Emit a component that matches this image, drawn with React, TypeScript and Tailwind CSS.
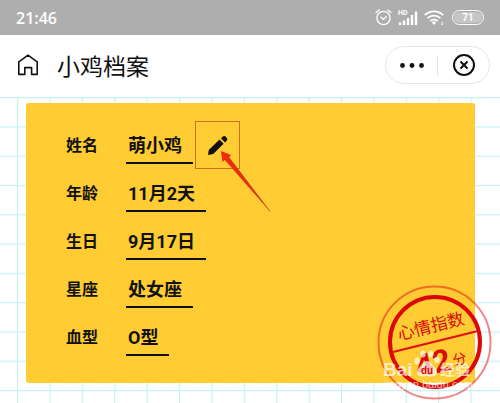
import clsx from "clsx";

const profile = [
  { label: "姓名", value: "萌小鸡", editable: true },
  { label: "年龄", value: "11月2天" },
  { label: "生日", value: "9月17日" },
  { label: "星座", value: "处女座" },
  { label: "血型", value: "O型" },
];

const StatusBar = () => (
  <div className="h-[35px] bg-[#aeaeae] text-white flex items-center pl-4 pr-4">
    <span className="font-['Open_Sans',sans-serif] text-base leading-5 font-semibold">21:46</span>
    <div className="ml-auto flex items-center gap-1.5">
      {/* alarm */}
      <svg className="w-[17px] h-[17px]" viewBox="0 0 17 17" fill="none" stroke="currentColor" strokeWidth="1.3" strokeLinecap="round">
        <circle cx="8.5" cy="9" r="6.6" />
        <path d="M1 3.6 4.2 1M16 3.6 12.8 1M6 8.2 8.4 10.4 11.4 7.6" />
      </svg>
      <svg className="w-[20px] h-[17px]" viewBox="0 0 20 17" fill="currentColor">
        <text x="0" y="6" fontSize="7" fontWeight="700" fontFamily="Roboto, sans-serif">HD</text>
        <path d="M.8 13.5h2.400V16H.8zM4.800 11.500h2.400V16H4.800zM8.800 9h2.400v7H8.800zM12.800 6h2.400v10h-2.400zM16.800 2.500h2.400V16h-2.400z" />
      </svg>
      {/* wifi */}
      <svg className="w-[20px] h-[17px]" viewBox="0 0 20 17" fill="none" stroke="currentColor" strokeWidth="1.8">
        <path d="M.8 6.200a13 13 0 0 1 18.400 0M3.600 9.200a9 9 0 0 1 12.800 0M6.300 12.100a5.200 5.200 0 0 1 7.400 0" />
        <path d="M10 16 7.800 13.600a3.200 3.200 0 0 1 4.400 0z" fill="currentColor" stroke="none" />
        <path d="M18.300 12.500v3.500M17.200 14.800l1.100 1.200" strokeWidth=".8" />
      </svg>
      <span className="ml-0.5 w-8 h-[15px] rounded-full border border-white p-px flex">
        <span className="flex-1 rounded-full bg-[#c6c6c6] flex items-center justify-center font-['Roboto',sans-serif] text-[10px] leading-3 font-bold">71</span>
      </span>
    </div>
  </div>
);

const Header = () => (
  <header className="h-[62px] bg-white flex items-center pl-4 pr-[10px] pb-0.5">
    <button aria-label="首页" className="w-6 h-6 flex items-center justify-center">
      <svg className="w-[22px] h-[22px]" viewBox="0 0 22 22" fill="none" stroke="#111" strokeWidth="1.6" strokeLinejoin="round">
        <path d="M1.800 7.800 11 1.200l9.200 6.600v12.600h-5.600v-6.800H7.800v6.800h-6z" />
      </svg>
    </button>
    <h1 className="ml-[17px] text-[23px] leading-8 text-[#111]">小鸡档案</h1>
    <div className="ml-auto w-[105px] h-[38px] rounded-full border border-[#e6e6e6] flex items-center">
      <button aria-label="更多" className="flex-1 h-full flex items-center justify-center">
        <svg className="w-6 h-[5px]" viewBox="0 0 24 5" fill="#111">
          <circle cx="2.500" cy="2.500" r="2.400" />
          <circle cx="12" cy="2.500" r="2.400" />
          <circle cx="21.500" cy="2.500" r="2.400" />
        </svg>
      </button>
      <span className="w-px h-5 bg-[#e4e4e4]" />
      <button aria-label="关闭" className="flex-1 h-full flex items-center justify-center">
        <svg className="w-[22px] h-[22px]" viewBox="0 0 22 22" fill="none" stroke="#111" strokeWidth="2">
          <circle cx="11" cy="11" r="10" />
          <path d="m7.500 7.500 7 7m0-7-7 7" />
        </svg>
      </button>
    </div>
  </header>
);

const GridPaper = () => (
  <svg className="absolute inset-0 w-full h-full" aria-hidden="true">
    <defs>
      <pattern id="grid" x="17" y="0" width="32.400" height="29.300" patternUnits="userSpaceOnUse">
        <path d="M.6 0V29.300M0 .6H32.400" stroke="#c9f0f4" strokeWidth="1.200" fill="none" />
      </pattern>
    </defs>
    <rect width="100%" height="100%" fill="url(#grid)" />
  </svg>
);

const EditButton = () => (
  <div className="absolute left-full top-[-13px] ml-0.5">
    <button aria-label="编辑姓名" className="w-[45px] h-[48px] border border-[#d0701c] flex items-center justify-center">
      <svg className="w-5 h-5" viewBox="0 0 20 20" fill="#111">
        <path d="M0 20 .8 15 11.500 4.600 15.600 8.700 5.200 19z" />
        <path d="M13 3.200 14.800 1.500Q16.500.3 18 1.900L18.800 2.900Q20 4.400 18.700 5.700L17 7.400z" />
      </svg>
    </button>
    {/* pointer towards the pencil */}
    <svg className="absolute left-[25px] top-[30px] w-[52px] h-[62px] pointer-events-none" viewBox="0 0 52 62">
      <path d="M1 0 11 4 9 6.400 50 60.500 4.800 9 2.500 11z" fill="#ee2a10" />
      <path d="M9 6.400 50 60.500" stroke="#a83a10" strokeWidth=".7" />
    </svg>
  </div>
);

const MoodStamp = () => (
  <svg className="absolute right-[-18px] bottom-[-19px] w-[118px] h-[118px]" viewBox="0 0 118 118" role="img" aria-label="心情指数 42分">
    <g fill="none" stroke="#e01010">
      <circle cx="59.500" cy="58.500" r="56" strokeWidth="2" opacity=".5" />
      <circle cx="60" cy="58" r="45" strokeWidth="4" stroke="#dc0808" />
      <path d="M18 68 103 47" strokeWidth="2.200" />
    </g>
    <g transform="rotate(-14 59 59)" fill="#d80c08" fontFamily="'Noto Sans CJK SC', sans-serif">
      <text x="60" y="48" fontSize="17" textAnchor="middle">心情指数</text>
      <text x="53" y="89" fontSize="31" fontWeight="700" fontFamily="Roboto, sans-serif" textAnchor="middle">42</text>
      <text x="73" y="86" fontSize="14">分</text>
    </g>
    <g fill="#fff" opacity=".7" fontFamily="'Liberation Sans', 'Noto Sans CJK SC', sans-serif" fontWeight="700">
      <text x="8" y="92" fontSize="19">Bai</text>
      <ellipse cx="42" cy="77" rx="2.600" ry="3.400" />
      <ellipse cx="48" cy="70" rx="2.600" ry="3.600" />
      <ellipse cx="56" cy="70" rx="2.600" ry="3.600" />
      <ellipse cx="62" cy="76" rx="2.600" ry="3.400" />
      <path d="M52 77C56 77 58 82 61 85 64 90 60 94 52 92 44 94 40 90 43 85 46 82 48 77 52 77z" />
      <text x="65" y="91" fontSize="15">经验</text>
    </g>
    <text x="52" y="90" fontSize="10" fontWeight="700" fill="#d80c08" fontFamily="'Liberation Sans', sans-serif" textAnchor="middle">du</text>
    <text x="9" y="104" fontSize="11" fill="#fff" opacity=".7" fontFamily="'Liberation Sans', sans-serif">jingyan.baidu.com</text>
  </svg>
);

const ProfileCard = () => (
  <section className="relative mt-1.5 ml-[26px] mr-[25px] rounded-[3px] bg-[#ffcc33] pt-[31px] pb-[27px] pl-10">
    <dl className="flex flex-col gap-[18px] font-['Roboto','Noto_Sans_CJK_SC',sans-serif] font-bold text-[#111]">
      {profile.map(({ label, value, editable }) => (
        <div key={label} className="flex items-start">
          <dt className="w-[60px] text-base leading-6">{label}</dt>
          <dd className={clsx("pl-0.5 pr-[11px] pb-1 text-lg leading-6 border-b-2 border-[#111]", editable && "relative")}>
            {value}
            {editable && <EditButton />}
          </dd>
        </div>
      ))}
    </dl>
    <MoodStamp />
  </section>
);

const App = () => (
  <div className="min-h-screen flex flex-col bg-white font-['Noto_Sans_CJK_SC',sans-serif]">
    <StatusBar />
    <Header />
    <main className="relative flex-1 flow-root overflow-hidden pb-5">
      <GridPaper />
      <ProfileCard />
    </main>
  </div>
);

export default App;
